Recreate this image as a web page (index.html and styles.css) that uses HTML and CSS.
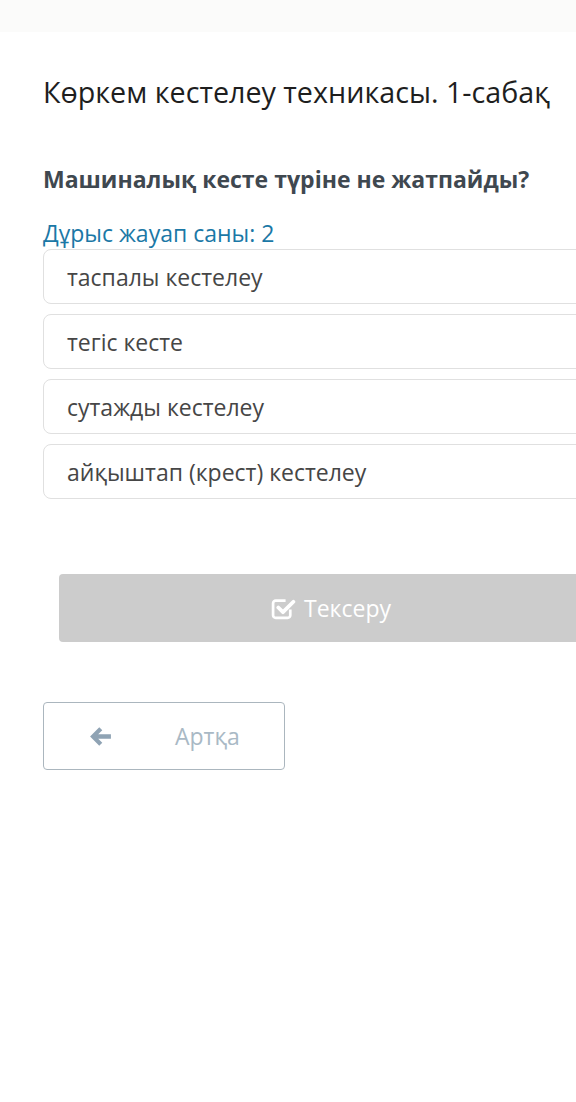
FILE: index.html
```html
<!DOCTYPE html>
<html>
<head>
    <title>Көркем кестелеу техникасы</title>
    <meta charset="UTF-8">
    <meta name="viewport" content="width=device-width, initial-scale=1.0">
    <link rel="stylesheet" href="styles.css">
</head>
<body>
    <div class="topbar"></div>

    <div class="container">
        <h1 class="title">Көркем кестелеу техникасы. 1-сабақ</h1>

        <div class="question">Машиналық кесте түріне не жатпайды?</div>
        <div class="hint">Дұрыс жауап саны: 2</div>

        <div class="answers">
            <div class="answer">таспалы кестелеу</div>
            <div class="answer">тегіс кесте</div>
            <div class="answer">сутажды кестелеу</div>
            <div class="answer">айқыштап (крест) кестелеу</div>
        </div>

        <button type="button" class="check-btn">
            <svg class="check-icon" viewBox="0 0 24 24" width="25" height="25">
                <path d="M18.5 13v5.5a2.5 2.5 0 0 1-2.5 2.5H4.5A2.5 2.5 0 0 1 2 18.5V7a2.5 2.5 0 0 1 2.5-2.5H14" fill="none" stroke="#fff" stroke-width="2.6" stroke-linejoin="round"/>
                <path d="M7 11l4.5 4.5L21.5 5.5" fill="none" stroke="#fff" stroke-width="3.6" stroke-linecap="round" stroke-linejoin="round"/>
            </svg>
            Тексеру
        </button>

        <button type="button" class="back-btn">
            <svg class="arrow-icon" viewBox="0 0 24 24" width="25" height="25">
                <path d="M10.8 3.2L2 12l8.8 8.8 2.9-2.9-3.9-3.8H22V9.9H9.8l3.9-3.8z" fill="#8FA3B4"/>
            </svg>
            <span>Артқа</span>
        </button>
    </div>
</body>
</html>
```

FILE: styles.css
```css
html, body {
    overflow-x: hidden;
}

body {
    margin: 0;
    font-family: "Open Sans", Arial, sans-serif;
    background-color: #FFFFFF;
}

.topbar {
    height: 32px;
    background-color: #FBFBFA;
}

.container {
    width: 576px;
    margin-left: 43px;
    padding-top: 40px;
}

.title {
    margin: 0;
    font-size: 28.7px;
    font-weight: normal;
    color: #1E1E1E;
    line-height: 40px;
    white-space: nowrap;
}

.question {
    margin-top: 52px;
    font-size: 23px;
    font-weight: bold;
    color: #3F4850;
    line-height: 30px;
}

.hint {
    margin-top: 24px;
    font-size: 23px;
    color: #1B78A6;
    line-height: 30px;
}

.answers {
    display: flex;
    flex-direction: column;
    gap: 10px;
    margin-top: 1px;
}

.answer {
    height: 55px;
    box-sizing: border-box;
    border: 1px solid #E0E0E0;
    border-radius: 8px;
    padding: 0 23px;
    display: flex;
    align-items: center;
    font-size: 23px;
    color: #464646;
}

.check-btn {
    display: flex;
    align-items: center;
    justify-content: center;
    gap: 8px;
    margin: 75px 16px 0 16px;
    width: 544px;
    height: 68px;
    border: none;
    border-radius: 4px;
    background-color: #CCCCCC;
    color: #FFFFFF;
    font-family: "Open Sans", Arial, sans-serif;
    font-size: 23px;
}

.back-btn {
    display: flex;
    align-items: center;
    margin-top: 60px;
    width: 242px;
    height: 68px;
    box-sizing: border-box;
    border: 1px solid #ABB6BE;
    border-radius: 4px;
    background-color: #FFFFFF;
    padding: 0 0 0 44px;
    color: #A9B9C5;
    font-family: "Open Sans", Arial, sans-serif;
    font-size: 23px;
}

.back-btn span {
    margin-left: 62px;
}
```
